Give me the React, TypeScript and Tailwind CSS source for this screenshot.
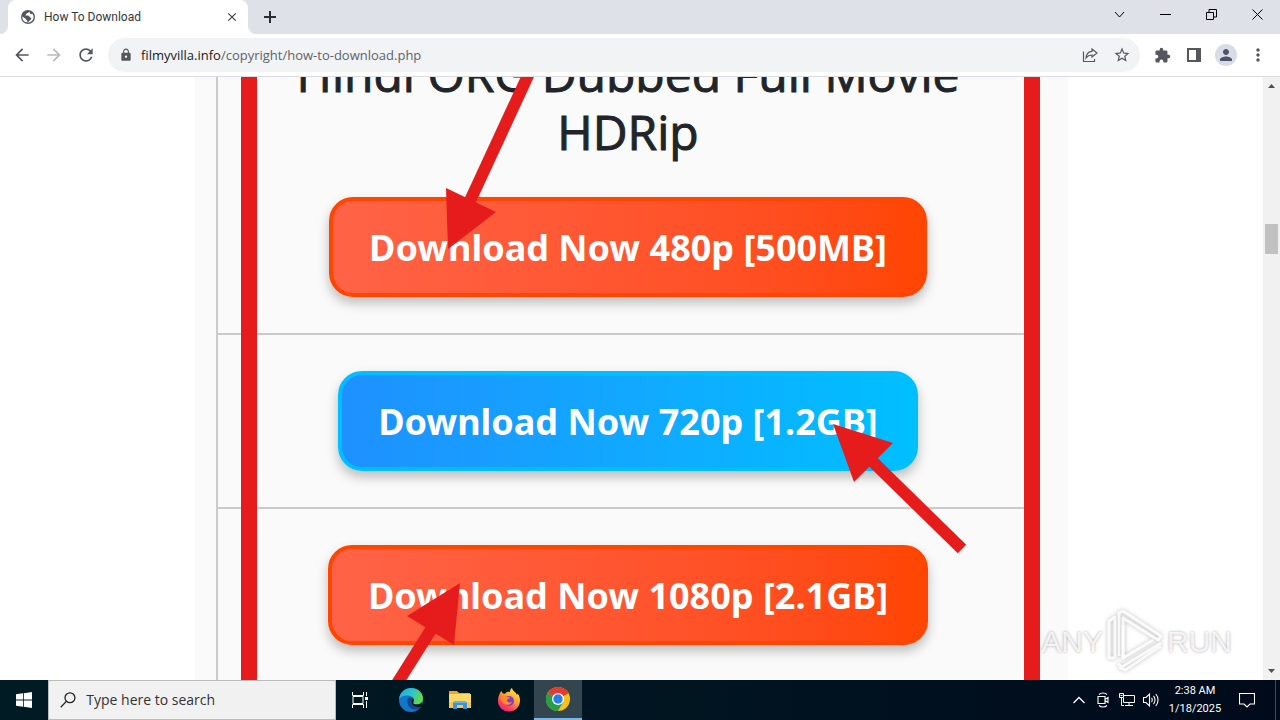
import type { ReactNode } from "react";
import {
  MdArrowBack,
  MdArrowForward,
  MdClose,
  MdExtension,
  MdLock,
  MdMoreVert,
  MdPerson,
  MdRefresh,
  MdStarBorder,
} from "react-icons/md";

const downloads = [
  { label: "Download Now 480p [500MB]", color: "orange" },
  { label: "Download Now 720p [1.2GB]", color: "blue" },
  { label: "Download Now 1080p [2.1GB]", color: "orange" },
];

export default function App() {
  return (
    <div className="flex h-screen flex-col overflow-hidden bg-white font-['Open_Sans',sans-serif]">
      <TabStrip />
      <Toolbar />
      <main className="relative flex min-h-0 flex-1">
        <Page />
        <Scrollbar />
        <Watermark />
      </main>
      <Taskbar />
    </div>
  );
}

function TabStrip() {
  return (
    <header className="flex h-[34px] shrink-0 bg-[#dee1e8] pl-2">
      <div className="relative flex w-60 items-center rounded-t-lg bg-white pr-2 pl-3">
        <svg className="absolute bottom-0 -left-2 size-2" viewBox="0 0 8 8" fill="#fff">
          <path d="M8 0v8H0a8 8 0 0 0 8-8z" />
        </svg>
        <svg className="absolute -right-2 bottom-0 size-2" viewBox="0 0 8 8" fill="#fff">
          <path d="M0 0v8h8a8 8 0 0 1-8-8z" />
        </svg>
        <svg className="size-4" viewBox="0 0 16 16">
          <circle cx="8" cy="8" r="7" fill="#54585d" />
          <path
            fill="#fff"
            d="M9 2.500c-.3 1.500-1 1.500-2.300 1.800-.3 1.200-1.200 1.300-1.200 2.200 1.500.3 3.300-.3 3.800 1 .4 1 1.700.8 2 1.700.2 1-1 2-2 2.600-.3.700-.8 1.400-1.600 1.700L7 11.500C5.500 10.500 6 9.500 4.500 9L2.300 7.500c-.2 3 1.700 6 5.700 6 3.200 0 5.600-2.600 5.600-5.500C13.600 7 13 5.500 12 4.500c-.6 1-1.700 1-2 0-.2-.7-.3-1.500-1-2z"
          />
        </svg>
        <h1 className="ml-2 flex-1 font-['Roboto',sans-serif] text-xs text-[#35363a]">
          How To Download
        </h1>
        <button aria-label="Close tab" className="flex size-4 items-center justify-center text-[#3c4043]">
          <MdClose className="size-3.5" />
        </button>
      </div>
      <button aria-label="New tab" className="ml-2 flex w-7 items-center justify-center text-[#2b2d33]">
        <svg className="size-3" viewBox="0 0 12 12" stroke="currentColor" strokeWidth="2">
          <path d="M6 0v12M0 6h12" />
        </svg>
      </button>
      <div className="ml-auto flex h-7 text-black">
        <WindowButton label="Search tabs">
          <path d="M1 3l4.500 5L10 3" />
        </WindowButton>
        <WindowButton label="Minimize">
          <path d="M0 5.500h11" />
        </WindowButton>
        <WindowButton label="Restore">
          <path d="M.5 3.500h7v7h-7zM3 3V.5h7.500v7.500H8" />
        </WindowButton>
        <WindowButton label="Close">
          <path d="M.5.5l10 10M10.500.5l-10 10" />
        </WindowButton>
      </div>
    </header>
  );
}

function WindowButton({ label, children }: { label: string; children: ReactNode }) {
  return (
    <button aria-label={label} className="flex w-[46px] items-center justify-center">
      <svg className="size-[11px]" viewBox="0 0 11 11" fill="none" stroke="currentColor">
        {children}
      </svg>
    </button>
  );
}

function ToolButton({ label, children }: { label: string; children: ReactNode }) {
  return (
    <button aria-label={label} className="flex h-full w-8 items-center justify-center">
      {children}
    </button>
  );
}

function Toolbar() {
  return (
    <nav className="flex h-[43px] shrink-0 items-center border-b border-[#dcdcde] px-1.5 text-[#54585d]">
      <ToolButton label="Back">
        <MdArrowBack className="size-5" />
      </ToolButton>
      <ToolButton label="Forward">
        <MdArrowForward className="size-5 text-[#bababd]" />
      </ToolButton>
      <ToolButton label="Reload">
        <MdRefresh className="size-5" />
      </ToolButton>
      <div className="ml-1.5 flex h-[34px] flex-1 items-center rounded-full bg-[#f1f3f5] pr-0.5 pl-[11px]">
        <MdLock className="size-3.5" />
        <div className="ml-2 flex-1 text-[13px] leading-4 text-[#5f6368]">
          <span className="text-[#202124]">filmyvilla.info</span>/copyright/how-to-download.php
        </div>
        <ToolButton label="Share">
          <svg className="size-4" viewBox="0 0 16 16" fill="none" stroke="currentColor" strokeWidth="1.2">
            <path d="M1.500 4.500v10h11V12M10 2l5 4-5 4V8C7.500 8 5.500 9 4 11c.3-3.500 2.500-6.500 6-6.700z" />
          </svg>
        </ToolButton>
        <ToolButton label="Bookmark this tab">
          <MdStarBorder className="size-[18px]" />
        </ToolButton>
      </div>
      <div className="ml-1.5 flex h-full items-center">
        <ToolButton label="Extensions">
          <MdExtension className="size-[17px]" />
        </ToolButton>
        <ToolButton label="Side panel">
          <svg className="size-3.5" viewBox="0 0 14 14">
            <path fill="currentColor" fillRule="evenodd" d="M0 0h14v14H0zM2 2v10h7V2z" />
          </svg>
        </ToolButton>
        <ToolButton label="Profile">
          <span className="flex size-[22px] items-center justify-center rounded-full bg-[#d9dce6]">
            <MdPerson className="size-[18px] text-[#4c5468]" />
          </span>
        </ToolButton>
        <ToolButton label="Menu">
          <MdMoreVert className="size-5" />
        </ToolButton>
      </div>
    </nav>
  );
}

function Page() {
  return (
    <div className="min-w-0 flex-1 overflow-hidden">
      <div className="relative mx-auto h-full w-full max-w-[873px] overflow-hidden bg-[#fafafa] pr-7 pl-[21px]">
        <div className="border-x-2 border-[#cbcbcb]">
          <h2 className="-mt-8 text-center text-5xl leading-[58px] text-[#212529] [-webkit-text-stroke:1px_#212529]">
            Hindi ORG Dubbed Full Movie
            <br />
            HDRip
          </h2>
          {downloads.map((item) => (
            <div
              key={item.label}
              className="flex justify-center border-b-2 border-[#cbcbcb] py-9"
            >
              <a
                href="#download"
                className={
                  item.color === "blue"
                    ? "rounded-3xl border-4 border-[#00bfff] bg-linear-to-r from-[#1e90ff] to-[#00bfff] bg-origin-border px-9 pt-[19px] pb-[17px] font-['Noto_Sans',sans-serif] text-4xl leading-14 font-bold text-white shadow-[0_6px_12px_rgba(0,0,0,0.25)]"
                    : "rounded-3xl border-4 border-[#ff4500] bg-linear-to-r from-[#ff6347] to-[#ff4500] bg-origin-border px-9 pt-[19px] pb-[17px] font-['Noto_Sans',sans-serif] text-4xl leading-14 font-bold text-white shadow-[0_6px_12px_rgba(0,0,0,0.25)]"
                }
              >
                {item.label}
              </a>
            </div>
          ))}
        </div>
        <Arrows />
      </div>
    </div>
  );
}

// red frame and the hand-drawn pointers on top of the buttons
function Arrows() {
  return (
    <>
      <div className="pointer-events-none absolute inset-y-0 right-7 left-[46px] border-x-16 border-[#e61b1c]" />
      <svg
        className="pointer-events-none absolute top-0 left-0 w-full"
        viewBox="0 0 873 603"
        fill="#e61b1c"
        stroke="none"
      >
        <path d="M251 111L301 135L253 172z" />
        <path d="M638 347L698 366L659 405z" />
        <path d="M265 506L259 568L212 539z" />
        <g stroke="#e61b1c" strokeWidth="12">
          <path d="M336 -8L274 126" />
          <path d="M767 472L675 382" />
          <path d="M198 613L237 551" />
        </g>
      </svg>
    </>
  );
}

function Scrollbar() {
  return (
    <div className="flex w-[17px] flex-col items-center bg-[#f1f1f1]">
      <svg className="size-[17px]" viewBox="0 0 17 17" fill="#505050">
        <path d="M5 11l3.500-4 3.500 4z" />
      </svg>
      <div className="mt-[130px] h-[30px] w-[13px] bg-[#c1c1c1]" />
      <svg className="mt-auto size-[17px]" viewBox="0 0 17 17" fill="#505050">
        <path d="M5 6l3.500 4L12 6z" />
      </svg>
    </div>
  );
}

function Watermark() {
  return (
    <div className="pointer-events-none absolute right-12 bottom-2 flex items-center gap-1 font-['Liberation_Sans',sans-serif] text-[30px] text-white/80 text-shadow-[0_0_3px_rgba(0,0,0,0.35)]">
      <span>ANY</span>
      <svg
        className="h-[62px] w-14 drop-shadow-[0_0_2px_rgba(0,0,0,0.3)]"
        viewBox="0 0 56 62"
        fill="none"
        stroke="#fff"
        strokeOpacity=".85"
        strokeWidth="3"
        strokeLinejoin="round"
      >
        <path d="M8 48H2V11l6-4v41M12 46V3l4-2 38 25-3 4L16 8v41" />
        <path d="M16 15v33l30-18M54 33L15 57l-4-3M54 36L18 60l-6-3" />
      </svg>
      <span>RUN</span>
    </div>
  );
}

function TaskItem({ label, children }: { label: string; children: ReactNode }) {
  return (
    <button aria-label={label} className="flex w-12 items-center justify-center">
      {children}
    </button>
  );
}

function Taskbar() {
  return (
    <footer className="flex h-10 shrink-0 bg-linear-to-r from-[#001b24] via-[#001521] to-[#000a1b] text-white">
      <TaskItem label="Start">
        <svg className="size-4" viewBox="0 0 16 16" fill="#fff">
          <path d="M0 2.300L7 1.300V7.600H0zM7.800 1.200L16 0v7.600H7.800zM0 8.400h7v6.300L0 13.700zM7.800 8.400H16V16l-8.200-1.200z" />
        </svg>
      </TaskItem>
      <label className="flex w-72 items-center border border-[#b9bcbd] bg-[#f1f1f1] pl-[11px]">
        <svg className="size-[18px]" viewBox="0 0 18 18" fill="none" stroke="#222" strokeWidth="1.4">
          <circle cx="11" cy="6.500" r="5.500" />
          <path d="M7 10.500L.8 17" />
        </svg>
        <input
          aria-label="Type here to search"
          placeholder="Type here to search"
          className="ml-2.5 w-full min-w-0 bg-transparent text-sm text-[#333] outline-none placeholder:text-[#333]"
        />
      </label>
      <div className="mr-[3px] flex">
        <TaskItem label="Task view">
          <svg className="size-4" viewBox="0 0 16 16" fill="none" stroke="#fff">
            <path d="M.5 0v3.500h11V0M.5 16v-3.500h11V16M1 4.500h10v7H1zM14.500 0v4M14.500 9v7" />
            <path fill="#fff" stroke="none" d="M13 5h3v3h-3z" />
          </svg>
        </TaskItem>
      </div>
      <div className="flex gap-px">
        <TaskItem label="Edge">
          <EdgeIcon />
        </TaskItem>
        <TaskItem label="File Explorer">
          <FolderIcon />
        </TaskItem>
        <TaskItem label="Firefox">
          <FirefoxIcon />
        </TaskItem>
        <div className="flex border-b-2 border-[#76b9ed] bg-[#33464f]">
          <TaskItem label="Chrome">
            <ChromeIcon />
          </TaskItem>
        </div>
      </div>
      <Tray />
    </footer>
  );
}

function Tray() {
  return (
    <div className="ml-auto flex items-center">
      <button aria-label="Show hidden icons" className="flex w-6 justify-center">
        <svg className="h-2 w-3" viewBox="0 0 12 8" fill="none" stroke="#fff" strokeWidth="1.3">
          <path d="M.5 7L6 1.500 11.500 7" />
        </svg>
      </button>
      <button aria-label="Meet now" className="flex w-6 justify-center">
        <svg className="h-4 w-3" viewBox="0 0 12 16" fill="none" stroke="#fff" strokeWidth="1.1">
          <path d="M1 4.500h7v7H1zM8 7.500l3-2v5l-3-2M2 2.500C4 .5 8 .5 10 2.500M2 13.500c2 2 6 2 8 0" />
        </svg>
      </button>
      <button aria-label="Network" className="flex w-6 justify-center">
        <svg className="size-4" viewBox="0 0 16 16" fill="none" stroke="#fff">
          <path d="M5 3.500h10.500v7h-11V6M10 10.500v3M6 13.500h8M.5 1.500h4v4h-4zM2.500 5.500v8H5M1.500 3.500h2" />
        </svg>
      </button>
      <button aria-label="Volume" className="flex w-6 justify-center">
        <svg className="size-4" viewBox="0 0 16 16" fill="none" stroke="#fff" strokeWidth="1.1">
          <path d="M.5 5.500h2.500L6.500 2v12L3 10.500H.5zM8.500 6c1 1 1 3 0 4M10.500 4c2 2 2 6 0 8M12.800 2c3 3.500 3 8.500 0 12" />
        </svg>
      </button>
      <div className="w-16 text-center font-['Roboto',sans-serif] text-[11px] leading-[18px]">
        <p>2:38 AM</p>
        <p>1/18/2025</p>
      </div>
      <button aria-label="Notifications" className="flex w-10 justify-center">
        <svg className="size-4" viewBox="0 0 16 16" fill="none" stroke="#fff" strokeWidth="1.1">
          <path d="M.5 1.500h15v10.500H11L8 15l-3-3H.5z" />
        </svg>
      </button>
      <div className="ml-2 h-10 w-[5px] border-l border-[#3f4a58]" />
    </div>
  );
}

function EdgeIcon() {
  return (
    <svg className="size-6" viewBox="0 0 24 24">
      <defs>
        <linearGradient id="edgeTop" x1="0" x2="1" y1="0" y2=".4">
          <stop offset="0" stopColor="#1fa7e0" />
          <stop offset=".55" stopColor="#2fc3c9" />
          <stop offset="1" stopColor="#62d84e" />
        </linearGradient>
      </defs>
      <circle cx="12" cy="12" r="12" fill="#1476c9" />
      <path
        fill="url(#edgeTop)"
        d="M.1 11C.8 4.500 6 0 12 0c7 0 12 5 12 10.500 0 3.500-2.700 6-6.200 6-2.800 0-4.300-1-3.500-2.200 1.500-2 .5-5.800-3.800-6.600C6 6.800 1.500 8.500.1 11z"
      />
      <path fill="#114a8b" d="M8.500 11.500c-1 5 2 9.500 7 10 3 .2 5.500-1 7-3.200-4 1.700-9 .2-10-4.300-.3-1.500.2-3 1-4-2-1-4.500-.5-5 1.500z" />
      <path fill="#001722" d="M12.500 12.500c.3-1.400 1.200-2 1.900-1.900.8 1.200.7 2.700-.1 3.700-.8 1.200.7 2.200 3.500 2.200 2 0 3.800-.8 5-2.200l1.200 1.700-1.600 2.500c-5 1.700-10.400-.7-9.900-6z" />
    </svg>
  );
}

function FolderIcon() {
  return (
    <svg className="h-5 w-[22px]" viewBox="0 0 22 20">
      <path fill="#e9a829" d="M0 1h8l2 2h11v4H0z" />
      <path fill="#fbd767" d="M0 4h22v14H0z" />
      <path fill="#f8c84d" d="M0 12h22v6H0z" />
      <path fill="#3c94d2" d="M4 19v-6.500L6 11h10l2 1.500V19h-4v-4H8v4z" />
      <path fill="#65b4e8" d="M6 11h10l2 2H4z" />
    </svg>
  );
}

function FirefoxIcon() {
  return (
    <svg className="size-6" viewBox="0 0 24 24">
      <defs>
        <linearGradient id="fox" x1=".8" x2=".2" y1="0" y2="1">
          <stop offset="0" stopColor="#fff24a" />
          <stop offset=".45" stopColor="#ff9a2b" />
          <stop offset=".75" stopColor="#ff4057" />
          <stop offset="1" stopColor="#e0218a" />
        </linearGradient>
      </defs>
      <path
        fill="url(#fox)"
        d="M3 5l1.200-2L6 5.500l2 .2C9.500 4 11 3.500 13 4c0-2 .5-3 2-4 .5 3 4 4 5 7l.7-1.500C22.500 8 23 10 23 12.500 23 19 18 23.500 12 23.500S1 19 1 13c0-3 .7-5.500 2-8z"
      />
      <circle cx="12" cy="13" r="5" fill="#7a3fd0" />
      <path fill="#ff8b2e" d="M4 9c2-2 5-1.500 6.500 0L13 9.500c0 1.500-3 1.500-3 3 .5 2 3 2.500 5 1.500-1 3-6.500 4-9 1C4.500 13 4 11 4 9z" />
    </svg>
  );
}

function ChromeIcon() {
  return (
    <svg className="size-6" viewBox="0 0 24 24">
      <circle cx="12" cy="12" r="12" fill="#fbc116" />
      <path fill="#e33b2e" d="M12 12L1.600 6A12 12 0 0 1 22.400 6z" />
      <path fill="#269f4b" d="M12 12L1.600 6A12 12 0 0 0 12 24l5.200-9z" />
      <path fill="#e33b2e" d="M12 6h10.400L12 12z" />
      <circle cx="12" cy="12" r="6" fill="#fff" />
      <circle cx="12" cy="12" r="4.700" fill="#2b7de9" />
    </svg>
  );
}
